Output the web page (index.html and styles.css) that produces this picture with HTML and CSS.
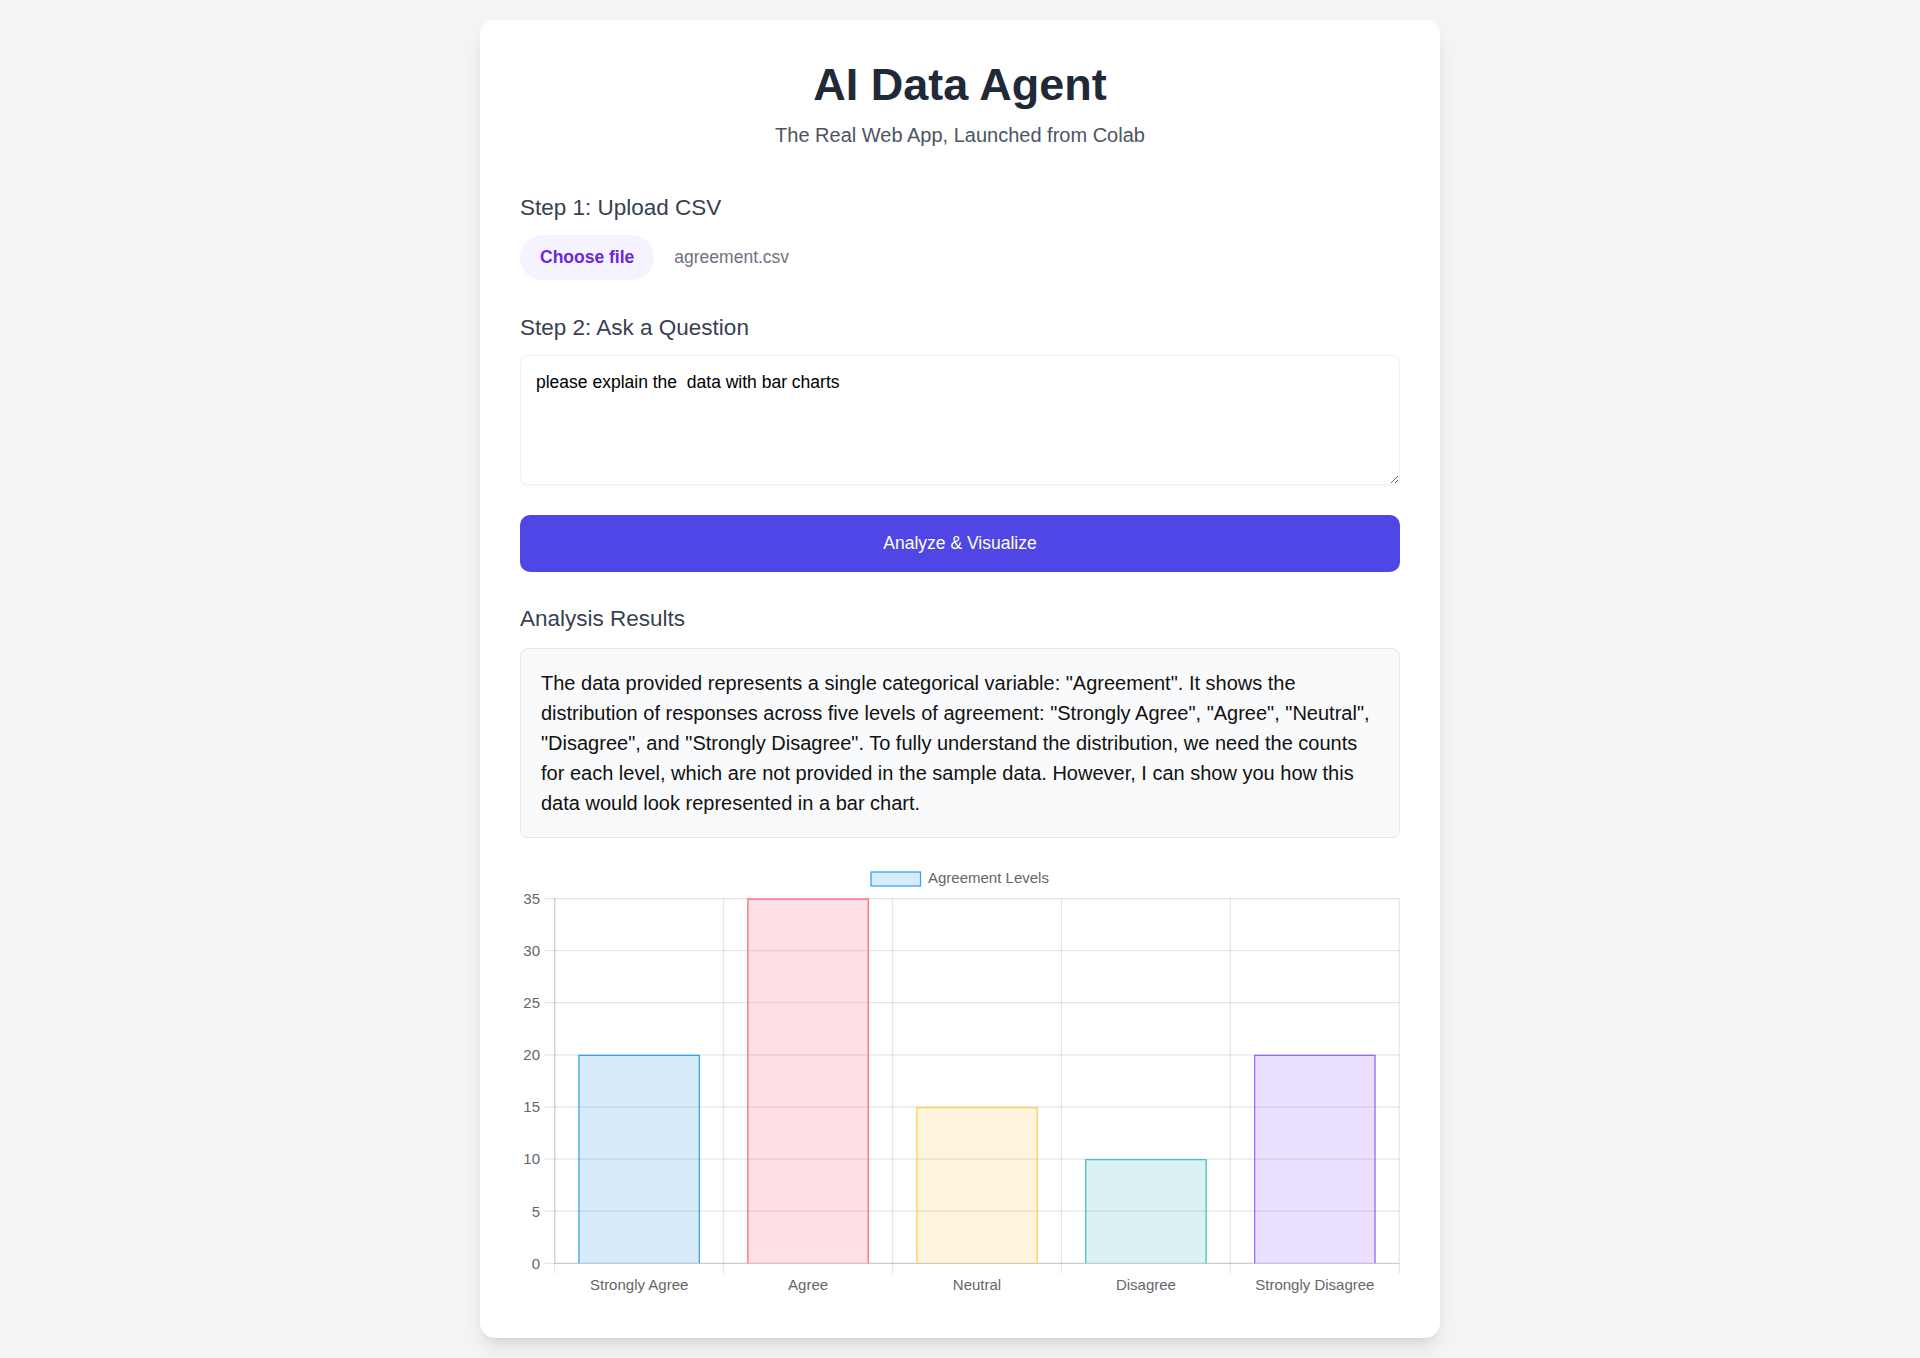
FILE: index.html
```html
<!DOCTYPE html>
<html lang="en">
<head>
<meta charset="utf-8">
<title>AI Data Agent</title>
<link rel="stylesheet" href="styles.css">
</head>
<body>
<main class="card">
  <header class="intro">
    <h1 class="title">AI Data Agent</h1>
    <p class="subtitle">The Real Web App, Launched from Colab</p>
  </header>

  <section class="step">
    <h2 class="step-title">Step 1: Upload CSV</h2>
    <div class="file-row">
      <button class="file-btn" type="button">Choose file</button>
      <span class="file-name">agreement.csv</span>
    </div>
  </section>

  <section class="step">
    <h2 class="step-title">Step 2: Ask a Question</h2>
    <textarea class="question" rows="4">please explain the  data with bar charts</textarea>
  </section>

  <button class="analyze" type="button">Analyze &amp; Visualize</button>

  <section class="results">
    <h2 class="step-title results-title">Analysis Results</h2>
    <div class="result-box">The data provided represents a single categorical variable: "Agreement". It shows the distribution of responses across five levels of agreement: "Strongly Agree", "Agree", "Neutral", "Disagree", and "Strongly Disagree". To fully understand the distribution, we need the counts for each level, which are not provided in the sample data. However, I can show you how this data would look represented in a bar chart.</div>

    <div class="chart">
      <svg class="chart-svg" width="880" height="440" viewBox="0 0 880 440">
        <!-- legend -->
        <rect class="legend-box" x="351" y="14" width="49.5" height="14"></rect>
        <text class="legend-label" x="408" y="25.3">Agreement Levels</text>

        <!-- horizontal grid -->
        <g class="grid">
          <line x1="24.7" y1="40.5" x2="879.3" y2="40.5"></line>
          <line x1="24.7" y1="92.61" x2="879.3" y2="92.61"></line>
          <line x1="24.7" y1="144.73" x2="879.3" y2="144.73"></line>
          <line x1="24.7" y1="196.84" x2="879.3" y2="196.84"></line>
          <line x1="24.7" y1="248.96" x2="879.3" y2="248.96"></line>
          <line x1="24.7" y1="301.07" x2="879.3" y2="301.07"></line>
          <line x1="24.7" y1="353.19" x2="879.3" y2="353.19"></line>
          <line x1="24.7" y1="405.3" x2="879.3" y2="405.3"></line>
        </g>
        <!-- vertical grid -->
        <g class="grid">
          <line x1="34.7" y1="40.5" x2="34.7" y2="415.3"></line>
          <line x1="203.62" y1="40.5" x2="203.62" y2="415.3"></line>
          <line x1="372.54" y1="40.5" x2="372.54" y2="415.3"></line>
          <line x1="541.46" y1="40.5" x2="541.46" y2="415.3"></line>
          <line x1="710.38" y1="40.5" x2="710.38" y2="415.3"></line>
          <line x1="879.3" y1="40.5" x2="879.3" y2="415.3"></line>
        </g>
        <!-- axis borders -->
        <g class="grid">
          <line x1="34.7" y1="40.5" x2="34.7" y2="405.3"></line>
          <line x1="34.7" y1="405.3" x2="879.3" y2="405.3"></line>
        </g>

        <!-- bars -->
        <rect class="bar-blue" x="58.36" y="196.84" width="121.6" height="208.46"></rect>
        <path class="edge-blue" d="M58.985 405.3 V197.465 H179.335 V405.3"></path>

        <rect class="bar-pink" x="227.28" y="40.5" width="121.6" height="364.8"></rect>
        <path class="edge-pink" d="M227.905 405.3 V41.125 H348.255 V405.3"></path>

        <rect class="bar-yellow" x="396.2" y="248.96" width="121.6" height="156.34"></rect>
        <path class="edge-yellow" d="M396.825 405.3 V249.585 H517.175 V405.3"></path>

        <rect class="bar-teal" x="565.12" y="301.07" width="121.6" height="104.23"></rect>
        <path class="edge-teal" d="M565.745 405.3 V301.695 H686.095 V405.3"></path>

        <rect class="bar-purple" x="734.04" y="196.84" width="121.6" height="208.46"></rect>
        <path class="edge-purple" d="M734.665 405.3 V197.465 H855.015 V405.3"></path>

        <!-- y labels -->
        <g class="tick-y">
          <text x="20" y="45.8">35</text>
          <text x="20" y="97.9">30</text>
          <text x="20" y="150">25</text>
          <text x="20" y="202.1">20</text>
          <text x="20" y="254.3">15</text>
          <text x="20" y="306.4">10</text>
          <text x="20" y="358.5">5</text>
          <text x="20" y="410.6">0</text>
        </g>
        <!-- x labels -->
        <g class="tick-x">
          <text x="119.16" y="432">Strongly Agree</text>
          <text x="288.08" y="432">Agree</text>
          <text x="457" y="432">Neutral</text>
          <text x="625.92" y="432">Disagree</text>
          <text x="794.84" y="432">Strongly Disagree</text>
        </g>
      </svg>
    </div>
  </section>
</main>
</body>
</html>
```

FILE: styles.css
```css
html, body {
  margin: 0;
  padding: 0;
}

body {
  background: #f3f4f6;
  padding: 20px;
  font-family: "Liberation Sans", Arial, Helvetica, sans-serif;
  color: #111827;
}

.card {
  box-sizing: border-box;
  max-width: 960px;
  margin: 0 auto;
  background: #ffffff;
  border-radius: 15px;
  padding: 40px;
  box-shadow: 0 12px 19px -4px rgba(0, 0, 0, 0.1), 0 5px 8px -5px rgba(0, 0, 0, 0.1);
}

.intro {
  text-align: center;
  margin-bottom: 40px;
}

.title {
  margin: 0;
  font-size: 45px;
  line-height: 50px;
  font-weight: 700;
  color: #1f2937;
}

.subtitle {
  margin: 10px 0 0;
  font-size: 20px;
  line-height: 30px;
  color: #4b5563;
}

.step {
  margin-bottom: 30px;
}

.step-title {
  margin: 0 0 10px;
  font-size: 22.5px;
  line-height: 35px;
  font-weight: 400;
  color: #374151;
}

.file-row {
  display: flex;
  align-items: center;
  height: 45px;
}

.file-btn {
  border: 0;
  border-radius: 9999px;
  background: #f5f3ff;
  color: #6d28d9;
  font-family: inherit;
  font-size: 17.5px;
  line-height: 25px;
  font-weight: 700;
  padding: 10px 20px;
  margin: 0 20px 0 0;
  cursor: pointer;
}

.file-name {
  font-size: 17.5px;
  line-height: 25px;
  color: #6b7280;
}

.question {
  display: block;
  box-sizing: border-box;
  width: 100%;
  height: 130px;
  margin: 0;
  padding: 14px 15px;
  border: 1px solid #f1f2f4;
  border-radius: 8px;
  box-shadow: 0 1px 2px rgba(0, 0, 0, 0.04);
  font-family: inherit;
  font-size: 17.5px;
  line-height: 25px;
  color: #000000;
  background: #ffffff;
  resize: vertical;
}

.analyze {
  display: block;
  width: 100%;
  height: 57px;
  border: 0;
  border-radius: 10px;
  background: #4f46e5;
  color: #ffffff;
  font-family: inherit;
  font-size: 17.5px;
  line-height: 25px;
  font-weight: 400;
  cursor: pointer;
}

.results {
  margin-top: 29px;
}

.results-title {
  margin-bottom: 12px;
}

.result-box {
  box-sizing: border-box;
  background: #f9fafb;
  border: 1px solid #e5e7eb;
  border-radius: 8px;
  padding: 19px 20px;
  font-size: 20px;
  line-height: 30px;
  color: #111111;
  height: 190px;
}

.chart {
  margin-top: 20px;
  height: 440px;
}

.chart-svg {
  display: block;
}

.grid line {
  stroke: rgba(0, 0, 0, 0.1);
  stroke-width: 1.25;
}

.legend-box {
  fill: rgba(54, 162, 235, 0.2);
  stroke: rgb(54, 162, 235);
  stroke-width: 1.25;
}

.legend-label,
.tick-y text,
.tick-x text {
  font-family: "Liberation Sans", Arial, Helvetica, sans-serif;
  font-size: 15px;
  fill: #666666;
}

.tick-y text {
  text-anchor: end;
}

.tick-x text {
  text-anchor: middle;
}

.bar-blue { fill: rgba(54, 162, 235, 0.2); }
.bar-pink { fill: rgba(255, 99, 132, 0.2); }
.bar-yellow { fill: rgba(255, 206, 86, 0.2); }
.bar-teal { fill: rgba(75, 192, 192, 0.2); }
.bar-purple { fill: rgba(153, 102, 255, 0.2); }

.edge-blue, .edge-pink, .edge-yellow, .edge-teal, .edge-purple {
  fill: none;
  stroke-width: 1.25;
}

.edge-blue { stroke: rgb(54, 162, 235); }
.edge-pink { stroke: rgb(255, 99, 132); }
.edge-yellow { stroke: rgb(255, 206, 86); }
.edge-teal { stroke: rgb(75, 192, 192); }
.edge-purple { stroke: rgb(153, 102, 255); }
```
